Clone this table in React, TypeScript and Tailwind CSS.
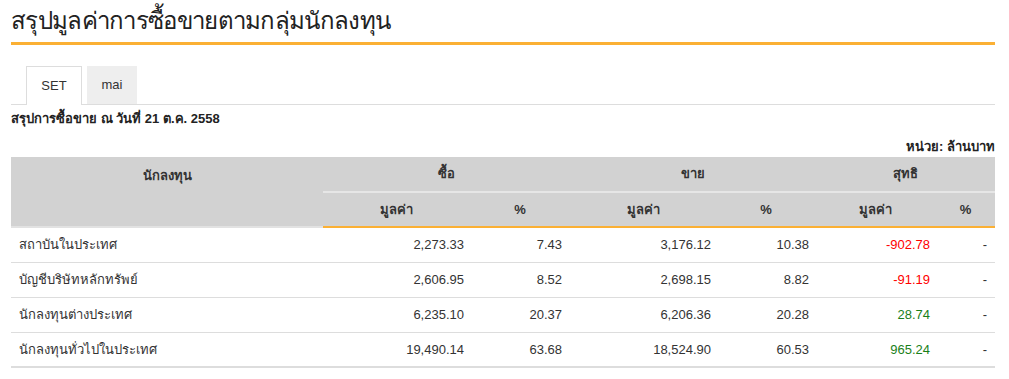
const rows = [
  { name: 'สถาบันในประเทศ', bv: '2,273.33', bp: '7.43', sv: '3,176.12', sp: '10.38', nv: '-902.78', np: '-' },
  { name: 'บัญชีบริษัทหลักทรัพย์', bv: '2,606.95', bp: '8.52', sv: '2,698.15', sp: '8.82', nv: '-91.19', np: '-' },
  { name: 'นักลงทุนต่างประเทศ', bv: '6,235.10', bp: '20.37', sv: '6,206.36', sp: '20.28', nv: '28.74', np: '-' },
  { name: 'นักลงทุนทั่วไปในประเทศ', bv: '19,490.14', bp: '63.68', sv: '18,524.90', sp: '60.53', nv: '965.24', np: '-' },
];

const App = () => {
  return (
    <div className="bg-white pt-[4px] font-['Liberation_Sans',Tahoma,sans-serif] text-[13px] text-[#333]">
      <div className="ml-[11px] w-[984px]">
        <h1 className="border-b-[3px] border-[#fbb034] pb-[3px] font-['Roboto',sans-serif] text-[24px] leading-[35px] font-light tracking-[-0.7px] text-[#222]">
          สรุปมูลค่าการซื้อขายตามกลุ่มนักลงทุน
        </h1>

        <div className="mt-[21px] flex gap-x-[5px] border-b border-[#ddd] pl-[15px]">
          <div className="-mb-px flex h-[39px] w-[56px] items-center justify-center border border-b-0 border-[#ddd] bg-white">
            SET
          </div>
          <div className="flex h-[38px] w-[50px] items-center justify-center bg-[#eee]">mai</div>
        </div>

        <p className="mt-[6px] text-[13px] leading-[16px] font-bold text-[#222]">
          สรุปการซื้อขาย ณ วันที่ 21 ต.ค. 2558
        </p>
        <p className="mt-[12px] text-right text-[13px] leading-[16px] font-bold text-[#222]">หน่วย: ล้านบาท</p>

        <table className="mt-[2px] w-full table-fixed border-collapse">
          <colgroup>
            <col className="w-[312px]" />
            <col className="w-[147px]" />
            <col className="w-[100px]" />
            <col className="w-[147px]" />
            <col className="w-[98px]" />
            <col className="w-[121px]" />
            <col className="w-[59px]" />
          </colgroup>
          <thead className="bg-[#d2d2d2] text-[#333]">
            <tr className="h-[35px]">
              <th rowSpan={2} className="border-b-2 border-[#e2e2e2] pt-[9px] align-top font-bold">
                นักลงทุน
              </th>
              <th colSpan={2} className="border-b-2 border-[#e6e6e6] font-bold">ซื้อ</th>
              <th colSpan={2} className="border-b-2 border-[#e6e6e6] font-bold">ขาย</th>
              <th colSpan={2} className="border-b-2 border-[#e6e6e6] font-bold">สุทธิ</th>
            </tr>
            <tr className="h-[35px]">
              {['มูลค่า', '%', 'มูลค่า', '%', 'มูลค่า', '%'].map((h, i) => (
                <th key={i} className="border-b-2 border-[#fbb034] font-bold">
                  {h}
                </th>
              ))}
            </tr>
          </thead>
          <tbody>
            {rows.map((r, i) => (
              <tr
                key={r.name}
                className={`h-[35px] border-b border-[#ddd] ${i === rows.length - 1 ? 'border-b-2' : ''}`}
              >
                <td className="pl-[8px] text-left">{r.name}</td>
                <td className="pr-[6px] text-right">{r.bv}</td>
                <td className="pr-[8px] text-right">{r.bp}</td>
                <td className="pr-[6px] text-right">{r.sv}</td>
                <td className="pr-[6px] text-right">{r.sp}</td>
                <td className={`pr-[6px] text-right ${r.nv.startsWith('-') ? 'text-[#ff0000]' : 'text-[#1a7f1a]'}`}>
                  {r.nv}
                </td>
                <td className="pr-[8px] text-right">{r.np}</td>
              </tr>
            ))}
          </tbody>
        </table>
      </div>
    </div>
  );
};

export default App;
